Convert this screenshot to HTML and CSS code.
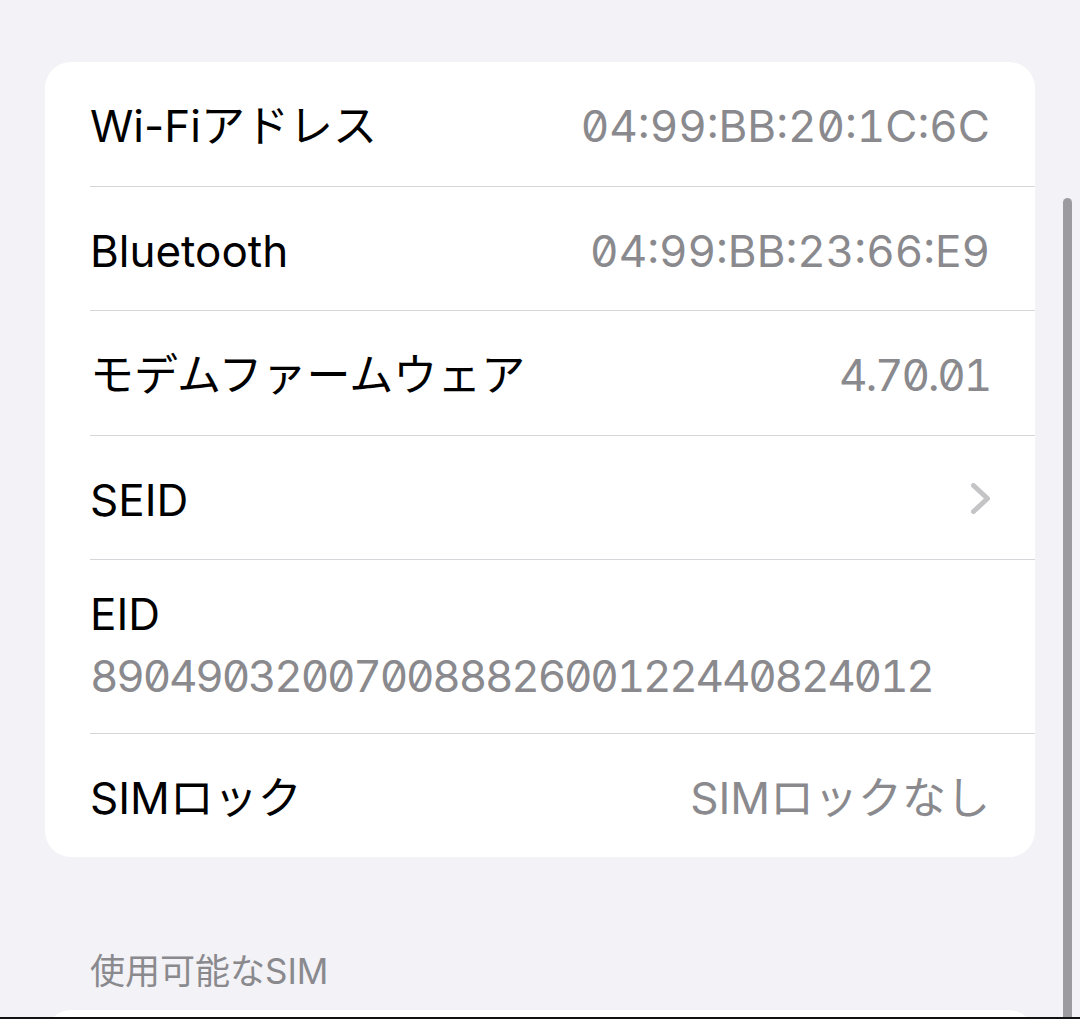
FILE: index.html
```html
<!DOCTYPE html>
<html lang="ja">
<head>
  <meta charset="UTF-8">
  <title>情報</title>
  <link rel="stylesheet" href="styles.css">
</head>
<body>

  <div class="page">
    <div class="group">
      <div class="row">
        <div class="row-inner">
          <span class="label">Wi-Fiアドレス</span>
          <span class="value">04:99:BB:20:1C:6C</span>
        </div>
      </div>
      <div class="row">
        <div class="row-inner">
          <span class="label">Bluetooth</span>
          <span class="value">04:99:BB:23:66:E9</span>
        </div>
      </div>
      <div class="row">
        <div class="row-inner">
          <span class="label">モデムファームウェア</span>
          <span class="value digits">4.70.01</span>
        </div>
      </div>
      <div class="row">
        <div class="row-inner">
          <span class="label">SEID</span>
          <svg class="chevron" width="19" height="31" viewBox="0 0 19 31">
            <polyline points="2.5,2.5 16.5,15.5 2.5,28.5" fill="none" stroke="#c4c4c7" stroke-width="5" stroke-linecap="round" stroke-linejoin="round"/>
          </svg>
        </div>
      </div>
      <div class="row">
        <div class="row-inner stacked">
          <span class="label">EID</span>
          <span class="value digits">89049032007008882600122440824012</span>
        </div>
      </div>
      <div class="row">
        <div class="row-inner">
          <span class="label">SIMロック</span>
          <span class="value">SIMロックなし</span>
        </div>
      </div>
    </div>

    <div class="section-header">使用可能なSIM</div>

    <div class="group next"></div>
  </div>

  <div class="scrollbar"></div>
  <div class="bottom-edge"></div>

</body>
</html>
```

FILE: styles.css
```css
html, body {
  margin: 0;
  height: 100%;
}

body {
  font-family: Inter, "Noto Sans CJK JP", sans-serif;
  background: #f2f2f7;
  overflow: hidden;
  position: relative;
}

.page {
  padding: 62px 45px 0;
}

.group {
  background: #fff;
  border-radius: 26px;
  overflow: hidden;
}

.row {
  padding-left: 45px;
}

.row-inner {
  display: flex;
  align-items: center;
  justify-content: space-between;
  height: 124.5px;
  padding-right: 45px;
  border-bottom: 1px solid #d6d6da;
  box-sizing: border-box;
}

.row:last-child .row-inner {
  border-bottom: none;
  height: 123px;
}

.label {
  font-size: 44px;
  line-height: 54px;
  color: #000;
  padding-top: 5px;
}

.value {
  font-size: 44px;
  line-height: 54px;
  color: #8a8a8e;
  padding-top: 5px;
  font-variant-numeric: tabular-nums slashed-zero;
}

.value.digits {
  letter-spacing: -2.2px;
}

.chevron {
  display: block;
  margin-top: 3px;
}

.row-inner.stacked {
  flex-direction: column;
  align-items: flex-start;
  justify-content: flex-start;
  height: 174px;
  padding-top: 23px;
}

.stacked .label,
.stacked .value {
  line-height: 62px;
  padding-top: 0;
}

.section-header {
  font-size: 35px;
  line-height: 44px;
  height: 44px;
  color: #8a8a8e;
  padding: 0 45px;
  margin-top: 92px;
  margin-bottom: 17px;
}

.group.next {
  height: 120px;
}

.scrollbar {
  position: absolute;
  right: 8px;
  top: 198px;
  bottom: -20px;
  width: 9px;
  border-radius: 5px;
  background: #9c9ca0;
}

.bottom-edge {
  position: absolute;
  left: 0;
  right: 0;
  bottom: 0;
  height: 2px;
  background: #111;
}
```
